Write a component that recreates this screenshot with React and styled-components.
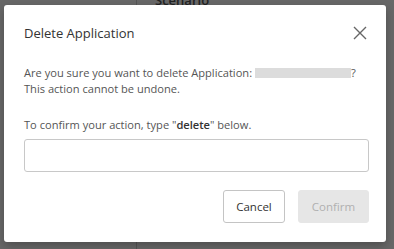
import React from 'react';
import styled, { createGlobalStyle } from 'styled-components';

const GlobalStyle = createGlobalStyle`
  html, body {
    margin: 0;
    padding: 0;
    background: #686868;
    font-family: "Open Sans", "Liberation Sans", sans-serif;
  }
`;

const Backdrop = styled.div`
  position: relative;
  width: 394px;
  height: 249px;
  overflow: hidden;
  background: #686868;
`;

const PageBehind = styled.div`
  display: grid;
  grid-template-columns: 137px 1fr;
  height: 100%;
  .side {
    border-right: 1px solid #555;
  }
  .main {
    padding-left: 18px;
    font-size: 13px;
    font-weight: 600;
    color: #222;
    line-height: 0;
  }
`;

const Dialog = styled.div`
  position: absolute;
  top: 5px;
  left: 4px;
  width: 382px;
  height: 237px;
  box-sizing: border-box;
  background: #fff;
  border-radius: 3px;
  box-shadow: 0 4px 10px rgba(0, 0, 0, 0.25);
  padding: 18px 17px 19px 20px;
  display: flex;
  flex-direction: column;
  color: #555;
`;

const Header = styled.div`
  display: flex;
  align-items: center;
  justify-content: space-between;
  height: 20px;
`;

const Title = styled.h2`
  margin: 0;
  font-size: 13px;
  font-weight: 400;
  color: #333;
`;

const CloseButton = styled.button`
  border: none;
  background: none;
  padding: 0;
  margin-right: 2px;
  width: 14px;
  height: 14px;
  display: flex;
  color: #666;
  cursor: pointer;
`;

const Text = styled.p`
  margin: ${p => p.$top}px 0 0;
  font-size: 11.1px;
  line-height: 16px;
  color: #555;
  b {
    color: #333;
    font-weight: 600;
  }
`;

const Redacted = styled.span`
  display: inline-block;
  width: 96px;
  height: 10px;
  margin-left: 3px;
  vertical-align: -1px;
  background: #dcdcdc;
`;

const Input = styled.input`
  margin-top: 6px;
  height: 33px;
  box-sizing: border-box;
  border: 1px solid #c8c8c8;
  border-radius: 3px;
  padding: 0 10px;
  font-family: inherit;
  font-size: 12px;
  outline: none;
`;

const Footer = styled.div`
  margin-top: auto;
  display: flex;
  justify-content: flex-end;
  gap: 13px;
`;

const Button = styled.button`
  height: 33px;
  min-width: ${p => p.$w}px;
  box-sizing: border-box;
  border-radius: 3px;
  font-family: inherit;
  font-size: 11.5px;
  padding: 0 12px;
  border: 1px solid ${p => (p.$disabled ? '#e6e6e6' : '#c4c4c4')};
  background: ${p => (p.$disabled ? '#e6e6e6' : '#fff')};
  color: ${p => (p.$disabled ? '#b0b0b0' : '#333')};
`;

export default function App() {
  return (
    <>
      <GlobalStyle />
      <Backdrop>
        <PageBehind>
          <div className="side" />
          <div className="main">Scenario</div>
        </PageBehind>
        <Dialog>
          <Header>
            <Title>Delete Application</Title>
            <CloseButton aria-label="Close">
              <svg width="14" height="14" viewBox="0 0 14 14" fill="none" stroke="currentColor" strokeWidth="1.4">
                <path d="M1 1 L13 13 M13 1 L1 13" />
              </svg>
            </CloseButton>
          </Header>
          <Text $top={22}>
            Are you sure you want to delete Application:<Redacted />?
            <br />
            This action cannot be undone.
          </Text>
          <Text $top={20}>
            To confirm your action, type "<b>delete</b>" below.
          </Text>
          <Input type="text" />
          <Footer>
            <Button $w={62}>Cancel</Button>
            <Button $w={71} $disabled>Confirm</Button>
          </Footer>
        </Dialog>
      </Backdrop>
    </>
  );
}
